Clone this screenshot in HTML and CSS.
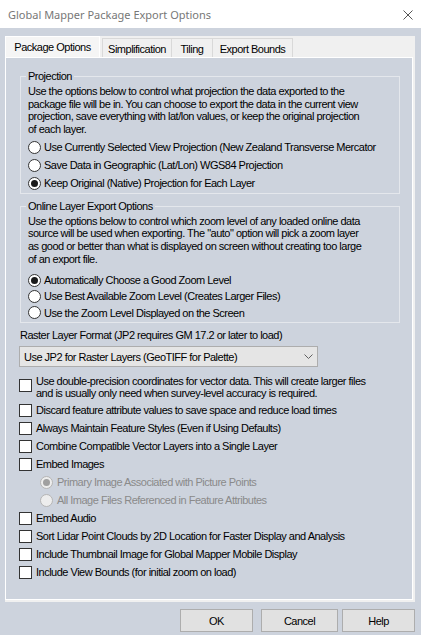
FILE: index.html
```html
<!DOCTYPE html>
<html>
<head>
<meta charset="utf-8">
<title>Global Mapper Package Export Options</title>
<link rel="stylesheet" href="styles.css">
</head>
<body>
<div class="titlebar">
  <span class="title">Global Mapper Package Export Options</span>
  <svg class="close" width="10" height="10" viewBox="0 0 10 10"><path d="M0.5 0.5 L9.5 9.5 M9.5 0.5 L0.5 9.5" stroke="#555" stroke-width="1" fill="none"/></svg>
</div>
<div class="tabctl">
  <div class="tabs">
    <div class="tab active">Package Options</div>
    <div class="tab t-simp">Simplification</div>
    <div class="tab t-tiling">Tiling</div>
    <div class="tab t-bounds">Export Bounds</div>
  </div>
  <div class="page">
    <fieldset class="group g-proj">
      <legend>Projection</legend>
      <p class="desc">Use the options below to control what projection the data exported to the<br>package file will be in. You can choose to export the data in the current view<br>projection, save everything with lat/lon values, or keep the original projection<br>of each layer.</p>
      <div class="opts">
        <div class="row"><span class="radio"></span><span class="lbl">Use Currently Selected View Projection (New Zealand Transverse Mercator</span></div>
        <div class="row"><span class="radio"></span><span class="lbl">Save Data in Geographic (Lat/Lon) WGS84 Projection</span></div>
        <div class="row"><span class="radio on"></span><span class="lbl">Keep Original (Native) Projection for Each Layer</span></div>
      </div>
    </fieldset>
    <fieldset class="group g-online">
      <legend>Online Layer Export Options</legend>
      <p class="desc">Use the options below to control which zoom level of any loaded online data<br>source will be used when exporting. The "auto" option will pick a zoom layer<br>as good or better than what is displayed on screen without creating too large<br>of an export file.</p>
      <div class="opts">
        <div class="row"><span class="radio on"></span><span class="lbl">Automatically Choose a Good Zoom Level</span></div>
        <div class="row"><span class="radio"></span><span class="lbl">Use Best Available Zoom Level (Creates Larger Files)</span></div>
        <div class="row"><span class="radio"></span><span class="lbl">Use the Zoom Level Displayed on the Screen</span></div>
      </div>
    </fieldset>
    <div class="fmt-label">Raster Layer Format (JP2 requires GM 17.2 or later to load)</div>
    <div class="combo">
      <span class="combo-text">Use JP2 for Raster Layers (GeoTIFF for Palette)</span>
      <svg class="chev" width="9" height="5" viewBox="0 0 9 5"><path d="M0.5 0.5 L4.5 4.5 L8.5 0.5" stroke="#606060" stroke-width="1" fill="none"/></svg>
    </div>
    <div class="checks">
      <div class="crow multi"><span class="box"></span><span class="lbl">Use double-precision coordinates for vector data. This will create larger files<br>and is usually only need when survey-level accuracy is required.</span></div>
      <div class="crow"><span class="box"></span><span class="lbl">Discard feature attribute values to save space and reduce load times</span></div>
      <div class="crow"><span class="box"></span><span class="lbl">Always Maintain Feature Styles (Even if Using Defaults)</span></div>
      <div class="crow"><span class="box"></span><span class="lbl">Combine Compatible Vector Layers into a Single Layer</span></div>
      <div class="crow"><span class="box"></span><span class="lbl">Embed Images</span></div>
      <div class="crow sub"><span class="radio dis on"></span><span class="lbl">Primary Image Associated with Picture Points</span></div>
      <div class="crow sub"><span class="radio dis"></span><span class="lbl">All Image Files Referenced in Feature Attributes</span></div>
      <div class="crow"><span class="box"></span><span class="lbl">Embed Audio</span></div>
      <div class="crow"><span class="box"></span><span class="lbl">Sort Lidar Point Clouds by 2D Location for Faster Display and Analysis</span></div>
      <div class="crow"><span class="box"></span><span class="lbl">Include Thumbnail Image for Global Mapper Mobile Display</span></div>
      <div class="crow"><span class="box"></span><span class="lbl">Include View Bounds (for initial zoom on load)</span></div>
    </div>
  </div>
</div>
<div class="buttons">
  <div class="btn b-ok">OK</div>
  <div class="btn b-cancel">Cancel</div>
  <div class="btn b-help">Help</div>
</div>
</body>
</html>
```
FILE: styles.css
```css
html, body {
  margin: 0;
  padding: 0;
}
body {
  width: 421px;
  height: 635px;
  overflow: hidden;
  background: #cdd3dd;
  font-family: "Liberation Sans", Arial, sans-serif;
  font-size: 11px;
  letter-spacing: -0.5px;
  color: #000;
}
.titlebar {
  height: 28px;
  background: #fff;
  display: flex;
  align-items: center;
  justify-content: space-between;
  padding: 0 8px 0 8px;
}
.title {
  font-family: "Noto Sans", "Open Sans", sans-serif;
  font-size: 11px;
  letter-spacing: 0;
  color: #777;
}
.close {
  display: block;
  margin-top: 1px;
}
.tabctl {
  margin: 8px 6px 0 5px;
  height: 566px;
  background: #f0f0f0;
  display: flex;
  flex-direction: column;
}
.tabs {
  height: 21px;
  display: flex;
  align-items: flex-start;
  flex: none;
}
.tab {
  box-sizing: border-box;
  height: 19px;
  margin-top: 2px;
  border: 1px solid #d9d9d9;
  border-bottom: none;
  background: #f0f0f0;
  display: flex;
  align-items: center;
  justify-content: center;
  padding-top: 1px;
}
.tab.active {
  width: 95px;
  height: 21px;
  margin-top: 0;
  padding-top: 0;
  padding-bottom: 1px;
  background: #f5f5f5;
  border-color: #fff;
}
.t-simp { width: 70px; margin-left: 2px; }
.t-tiling { width: 41px; border-left: none; }
.t-bounds { width: 80px; border-left: none; }
.page {
  flex: 1;
  box-sizing: border-box;
  margin: 0 2px 2px 0;
  border: 1px solid #fff;
  background: #cdd3dd;
  padding: 0 12px 0 14px;
}
.group {
  margin: 0;
  padding: 0 7px 0 7px;
  border: 1px solid #e4e7ec;
  min-inline-size: auto;
}
.group legend {
  padding: 0 2px;
  margin-left: -2px;
  line-height: 13px;
}
.g-proj { margin-top: 12px; padding-bottom: 1px; }
.g-online { margin-top: 5.5px; padding-bottom: 1.5px; }
.desc {
  margin: 2px 0 0 0;
  line-height: 12.7px;
  white-space: nowrap;
}
.opts { margin-top: 2.2px; }
.g-online .opts { margin-top: 6.7px; }
.row {
  height: 18px;
  display: flex;
  align-items: center;
  white-space: nowrap;
  overflow: hidden;
  margin-right: -7px;
}
.g-online .row { height: 16.3px; }
.radio {
  flex: none;
  box-sizing: border-box;
  width: 13px;
  height: 13px;
  border: 1px solid #333;
  border-radius: 50%;
  background: #fff;
  display: flex;
  align-items: center;
  justify-content: center;
}
.radio.on::after {
  content: "";
  width: 7px;
  height: 7px;
  border-radius: 50%;
  background: #1a1a1a;
}
.radio.dis {
  border-color: #b5b5b5;
  background: #ededed;
}
.radio.dis.on::after {
  background: #a0a0a0;
}
.row .lbl { margin-left: 3px; }
.fmt-label {
  margin-top: 5.2px;
  line-height: 13px;
}
.combo {
  box-sizing: border-box;
  margin: 4.8px 0 0 -1px;
  width: 299px;
  height: 21px;
  border: 1px solid #adadad;
  background: #e5e5e5;
  display: flex;
  align-items: center;
  justify-content: space-between;
  padding: 0 4px 0 4px;
}
.chev { display: block; }
.checks { margin-top: 7.5px; }
.crow {
  height: 18px;
  display: flex;
  align-items: center;
  white-space: nowrap;
}
.crow.multi {
  height: auto;
  align-items: flex-start;
  margin-bottom: 2px;
}
.crow.multi .lbl { line-height: 12.3px; }
.crow.multi .box { margin-top: 4.5px; }
.box {
  flex: none;
  box-sizing: border-box;
  width: 13px;
  height: 13px;
  margin-left: -1px;
  border: 1px solid #333;
  background: #fff;
}
.crow .lbl { margin-left: 4px; }
.crow.sub { padding-left: 20px; color: #8a8a8a; }
.crow.sub .lbl { margin-left: 4px; }
.buttons {
  display: flex;
  margin-top: 7px;
  padding-left: 180px;
}
.btn {
  box-sizing: border-box;
  height: 23px;
  border: 1px solid #adadad;
  background: #e1e1e1;
  display: flex;
  align-items: center;
  justify-content: center;
}
.b-ok { width: 73px; }
.b-cancel { width: 77px; margin-left: 8px; }
.b-help { width: 73px; margin-left: 4px; }
```
